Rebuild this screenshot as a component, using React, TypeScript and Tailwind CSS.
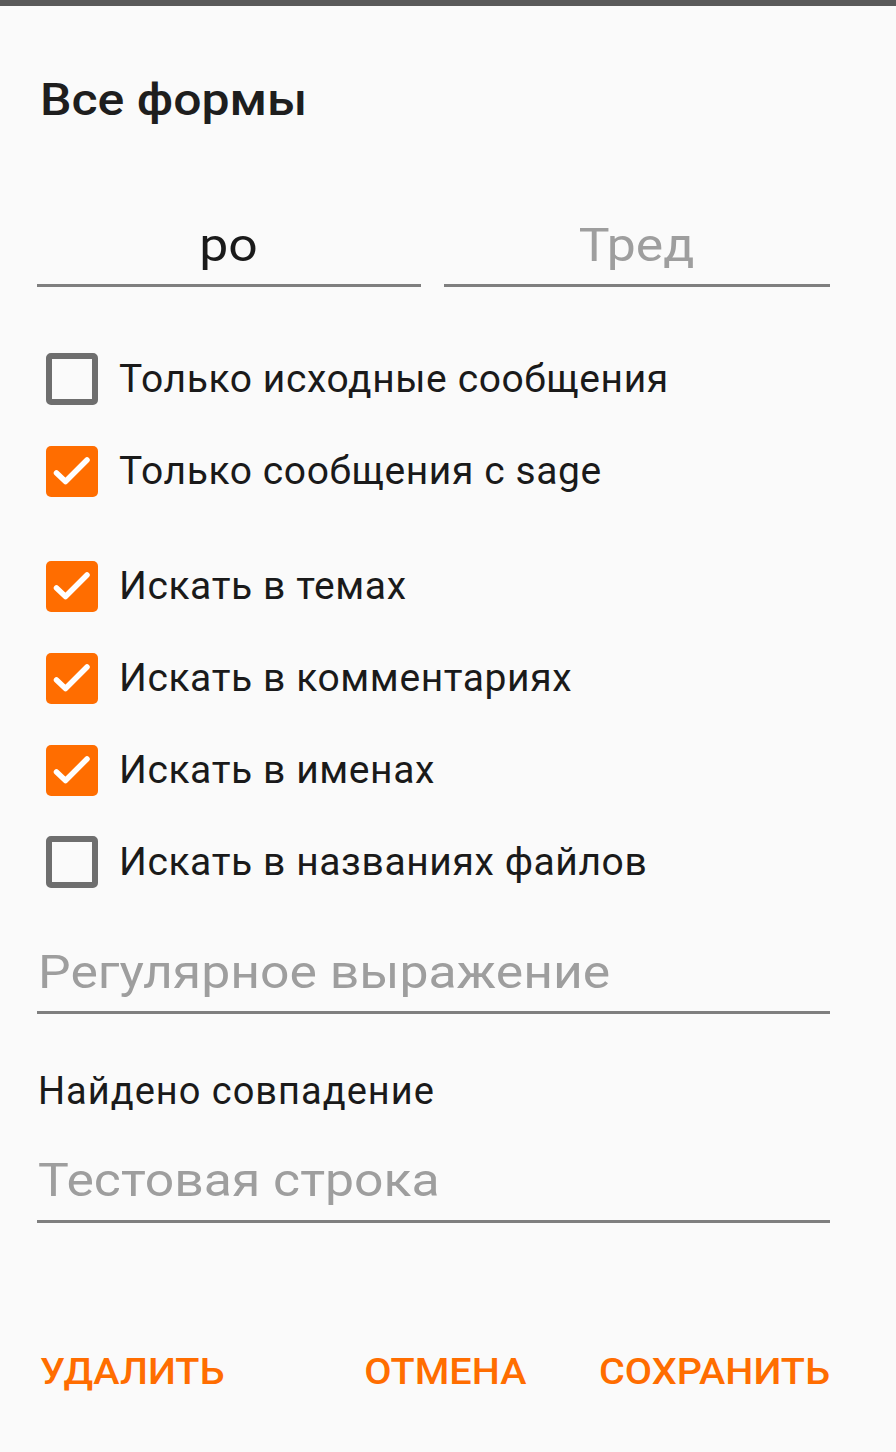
const font = { fontFamily: "Roboto, 'Noto Sans', sans-serif" };

function Box({ checked, label }: { checked: boolean; label: string }) {
  return (
    <div className="flex items-center h-[92px] pl-[46px]">
      {checked ? (
        <div className="w-[52px] h-[51px] rounded-[5px] bg-[#ff6d00]">
          <svg viewBox="0 0 52 51" className="w-[52px] h-[51px]">
            <polyline
              points="10.5,27 19.5,35.5 41,14"
              fill="none"
              stroke="#ffffff"
              strokeWidth="5.5"
              strokeLinecap="round"
              strokeLinejoin="round"
            />
          </svg>
        </div>
      ) : (
        <div className="w-[52px] h-[52px] rounded-[5px] border-[6px] border-[#6e6e6e]" />
      )}
      <span className="ml-[21px] text-[39px] tracking-[0.6px] text-[#1a1a1a] leading-none">{label}</span>
    </div>
  );
}

export default function App() {
  return (
    <div className="w-[896px] h-[1452px] bg-[#fafafa] flex flex-col overflow-hidden" style={font}>
      <div className="h-[6px] bg-[#5a5a5a]" />

      <h1 className="mt-[71px] ml-[40px] text-[45px] font-medium text-[#1e1e1e] leading-none">
        <span className="inline-block origin-left scale-x-[1.11]">Все формы</span>
      </h1>

      {/* board / thread */}
      <div className="mt-[82px] ml-[37px] w-[793px] flex gap-[23px] h-[83px]">
        <div className="flex-1 border-b-[3px] border-[#7f7f7f] flex items-center justify-center">
          <span className="inline-block scale-x-110 text-[47px] text-[#1a1a1a] leading-none">ро</span>
        </div>
        <div className="w-[386px] border-b-[3px] border-[#7f7f7f] flex items-center justify-center">
          <span className="inline-block scale-x-110 text-[47px] text-[#9e9e9e] leading-none">Тред</span>
        </div>
      </div>

      <div className="mt-[46px] flex flex-col">
        <Box checked={false} label="Только исходные сообщения" />
        <Box checked label="Только сообщения с sage" />
        <div className="h-[23px]" />
        <Box checked label="Искать в темах" />
        <Box checked label="Искать в комментариях" />
        <Box checked label="Искать в именах" />
        <Box checked={false} label="Искать в названиях файлов" />
      </div>

      <div className="mt-[20px] ml-[37px] w-[793px] border-b-[3px] border-[#7f7f7f] h-[86px] pt-[4px] flex items-center">
        <span className="inline-block origin-left scale-x-110 text-[47px] text-[#9e9e9e] leading-none pl-[1px]">
          Регулярное выражение
        </span>
      </div>

      <div className="mt-[58px] ml-[38px] text-[38px] tracking-[1px] text-[#1a1a1a] leading-none">Найдено совпадение</div>

      <div className="mt-[37px] ml-[37px] w-[793px] border-b-[3px] border-[#7f7f7f] h-[76px] pb-[8px] flex items-center">
        <span className="inline-block origin-left scale-x-110 text-[47px] text-[#9e9e9e] leading-none pl-[1px]">
          Тестовая строка
        </span>
      </div>

      <div className="mt-[131px] pl-[40px] pr-[66px] flex items-center text-[36px] font-medium text-[#ff6d00] leading-none">
        <span className="inline-block origin-left scale-x-110">УДАЛИТЬ</span>
        <span className="ml-auto inline-block origin-right scale-x-110">ОТМЕНА</span>
        <span className="ml-[94px] inline-block origin-right scale-x-110">СОХРАНИТЬ</span>
      </div>
    </div>
  );
}
